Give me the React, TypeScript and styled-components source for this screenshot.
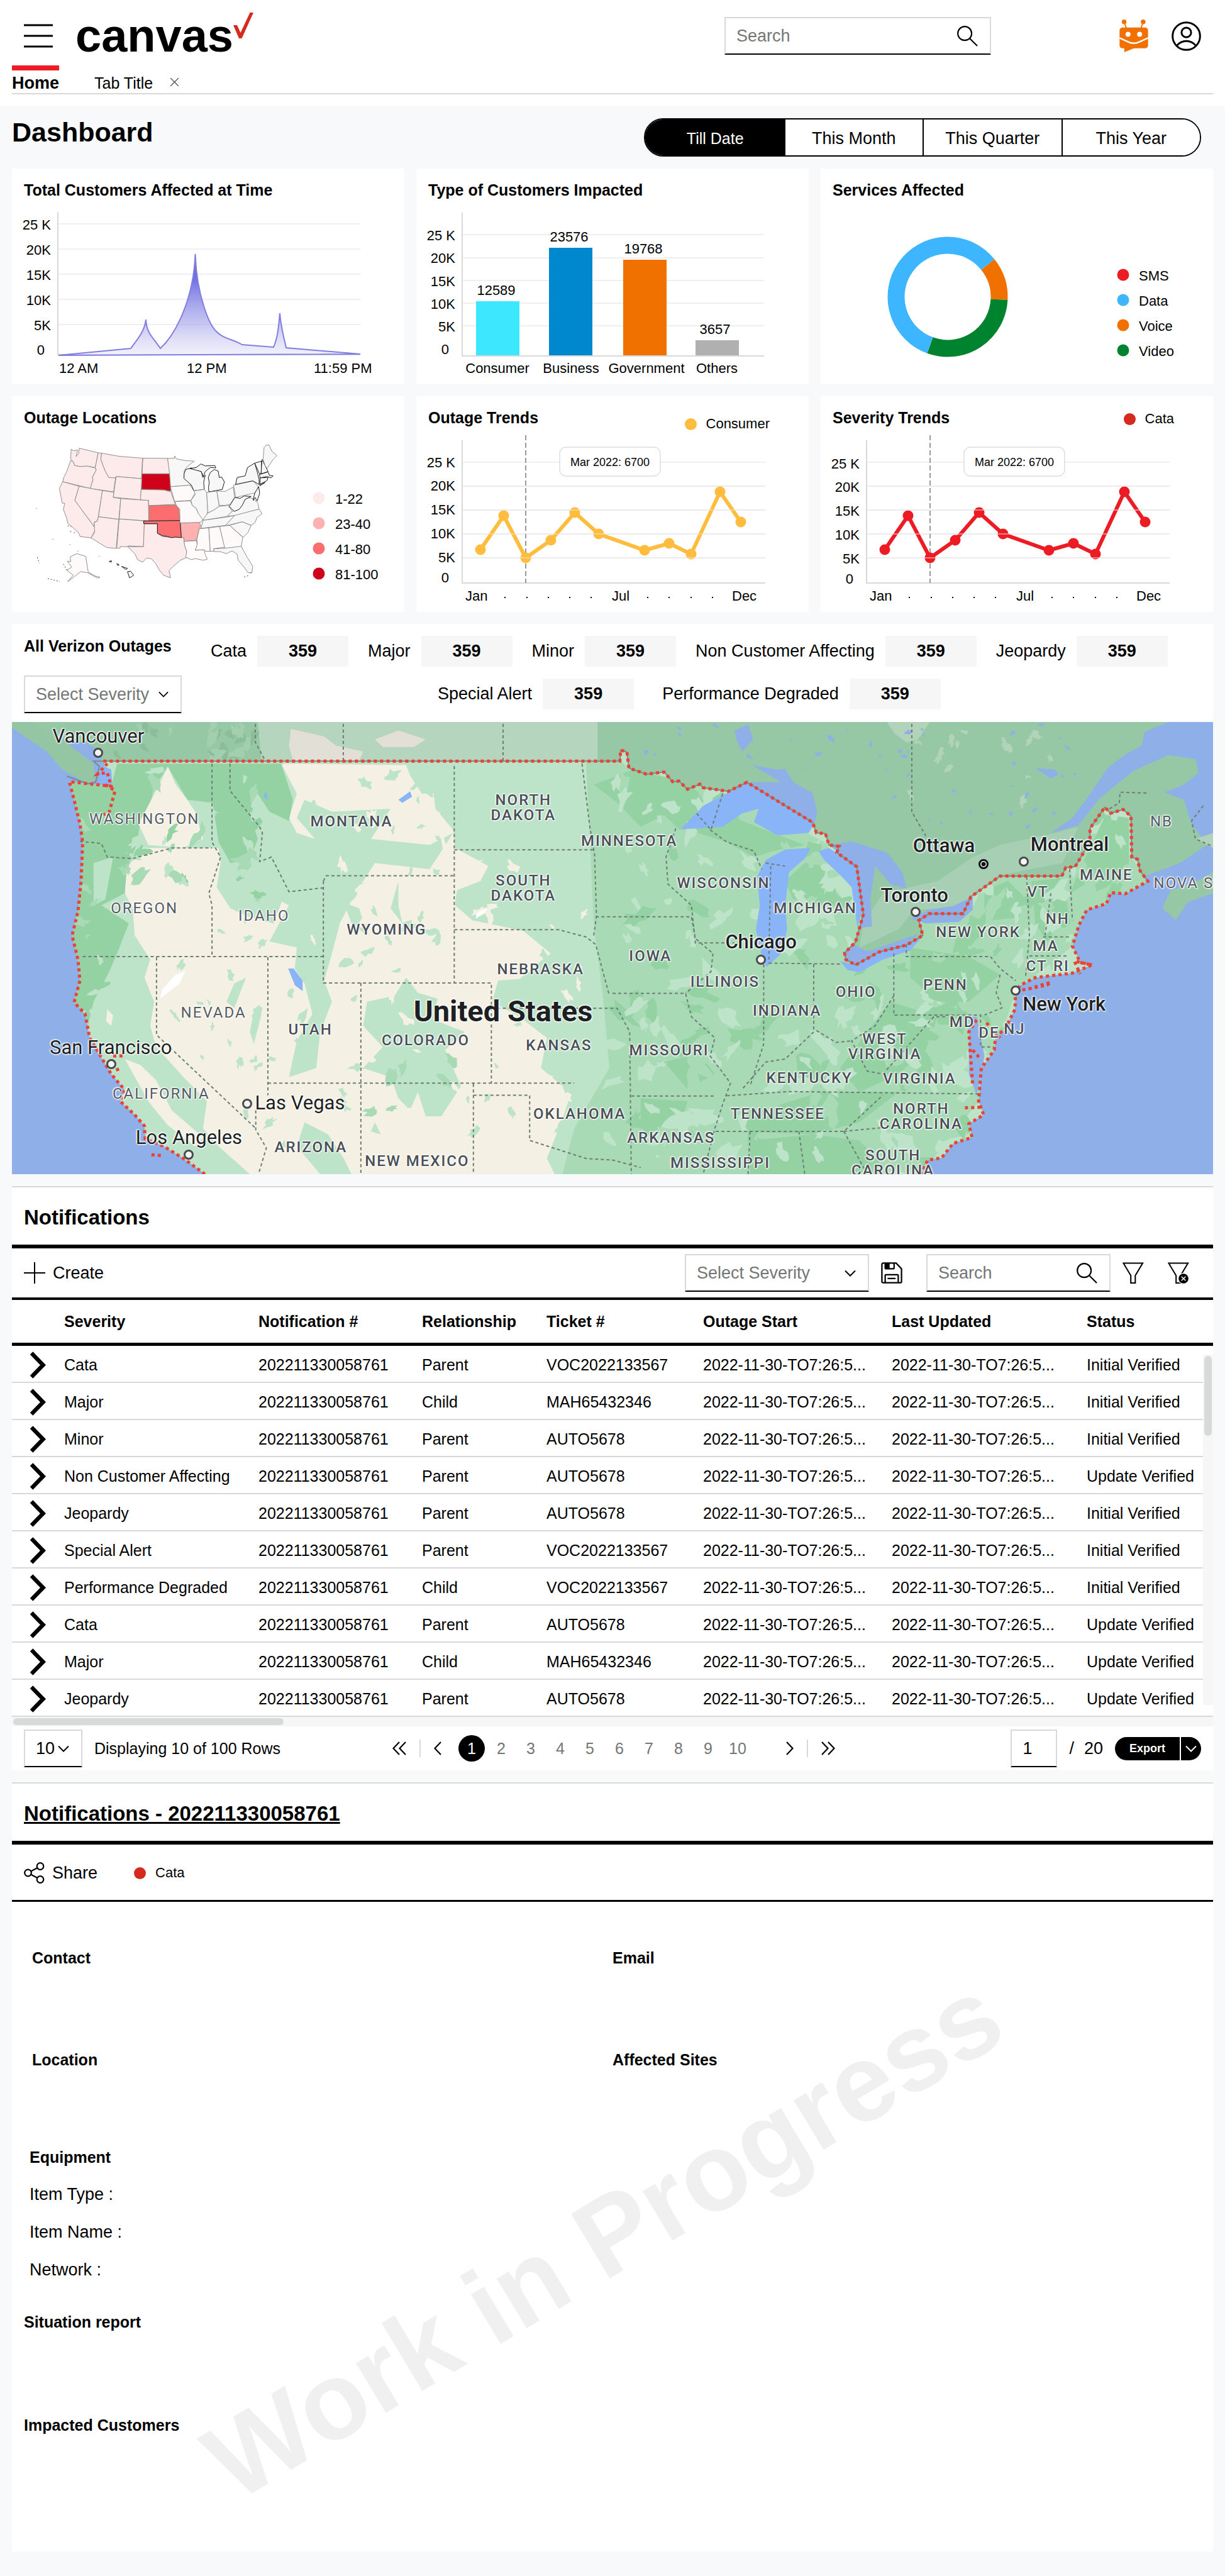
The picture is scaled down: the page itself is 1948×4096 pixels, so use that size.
import React from 'react';
import styled, { createGlobalStyle, css } from 'styled-components';

const GlobalStyle = createGlobalStyle`
  *, *::before, *::after { box-sizing: border-box; }
  body {
    margin: 0;
    background: #f8f9fb;
    color: #000;
    font-family: "Liberation Sans", Arial, sans-serif;
    font-size: 25px;
  }
  h1, h2, p { margin: 0; }
  button, input, select { font: inherit; color: inherit; }
  svg { display: block; }
`;

const HAIR = '#d8dada';
const MUTED = '#747676';

/* ---------- shared parts ---------- */

const IconButton = styled.button`
  display: flex;
  flex: none;
  padding: 0;
  border: 0;
  background: none;
`;

const Field = styled.label<{ $width: number }>`
  position: relative;
  display: flex;
  align-items: center;
  flex: none;
  width: ${(p) => p.$width}px;
  height: 60px;
  padding-right: 19px;
  border: 2px solid ${HAIR};
  border-bottom-color: #000;
  background: #fff;
`;

const FieldInput = styled.input`
  flex: 1;
  min-width: 0;
  height: 100%;
  padding: 0 0 0 17px;
  border: 0;
  background: transparent;
  font-size: 27px;
  outline: none;
  &::placeholder { color: ${MUTED}; opacity: 1; }
`;

const FieldSelect = styled.select<{ $muted?: boolean }>`
  position: absolute;
  inset: 0;
  width: 100%;
  height: 100%;
  padding: 0 0 0 17px;
  border: 0;
  background: transparent;
  appearance: none;
  font-size: 27px;
  color: ${(p) => (p.$muted ? MUTED : '#000')};
`;

const Push = styled.span`
  margin-left: auto;
`;

const ChevronDown = ({ width = 16, color = '#000' }: { width?: number; color?: string }) => (
  <svg width={width} height={width / 2 + 2} viewBox="0 0 18 11" fill="none" stroke={color} strokeWidth="2">
    <path d="M1 1.5 9 9.5 17 1.5" />
  </svg>
);

const SearchIcon = () => (
  <svg width="33" height="33" viewBox="0 0 34 34" fill="none" stroke="#000" strokeWidth="2.2">
    <circle cx="12.5" cy="12.5" r="11.3" />
    <path d="M20.5 20.5 33 33" />
  </svg>
);

function SelectBox(props: { label: string; value: string; width: number; muted?: boolean; chevron?: number }) {
  return (
    <Field $width={props.width}>
      <Push>
        <ChevronDown width={props.chevron} />
      </Push>
      <FieldSelect aria-label={props.label} $muted={props.muted} defaultValue={props.value}>
        <option>{props.value}</option>
      </FieldSelect>
    </Field>
  );
}

function SearchBox({ width }: { width: number }) {
  return (
    <Field $width={width}>
      <FieldInput aria-label="Search" type="text" placeholder="Search" />
      <SearchIcon />
    </Field>
  );
}

/* ---------- header ---------- */

const Header = styled.header`
  padding-bottom: 19px;
  background: #fff;
`;

const TopBar = styled.div`
  display: flex;
  align-items: center;
  height: 104px;
  padding: 10px 38px 0;
`;

const Brand = styled.a`
  display: flex;
  align-items: flex-start;
  margin-left: 36px;
  color: #000;
  font-size: 74px;
  font-weight: 700;
  line-height: 74px;
  text-decoration: none;
`;

const TopTools = styled.div`
  display: flex;
  align-items: center;
  gap: 37px;
  margin-left: auto;
`;

const ToolsGap = styled.div`
  margin-right: 167px;
`;

const TabList = styled.nav`
  display: flex;
  gap: 56px;
  height: 46px;
  margin: 0 19px;
  border-bottom: 2px solid ${HAIR};
`;

const Tab = styled.a<{ $active?: boolean }>`
  padding-top: 5px;
  border-top: 8px solid ${(p) => (p.$active ? '#ed1c24' : 'transparent')};
  color: #000;
  font-size: ${(p) => (p.$active ? 27 : 25)}px;
  font-weight: ${(p) => (p.$active ? 700 : 400)};
  line-height: 30px;
  text-decoration: none;
`;

const ClosableTab = styled.div`
  display: flex;
  align-items: flex-start;
  gap: 28px;
`;

const CloseButton = styled(IconButton)`
  margin-top: 20px;
`;

const BotIcon = () => (
  <svg width="46" height="52" viewBox="0 0 48 55">
    <g fill="#f07000">
      <circle cx="7.7" cy="4" r="4" />
      <circle cx="39.7" cy="4" r="4" />
      <path d="M7.7 4 11.5 15M39.7 4 36 15" stroke="#f07000" strokeWidth="2" />
      <rect y="13.5" width="48" height="35" rx="5" />
      <path d="M8 46V55L30 46Z" />
    </g>
    <circle cx="14.3" cy="24.8" r="4.2" fill="#fff" />
    <circle cx="33.7" cy="24.8" r="4.2" fill="#fff" />
    <path d="M0 31 14 37.5Q24 42.500 34 37.5L48 31" fill="none" stroke="#fff" strokeWidth="2.6" />
  </svg>
);

const UserIcon = () => (
  <svg width="47" height="47" viewBox="0 0 48 48" fill="none" stroke="#000" strokeWidth="3">
    <circle cx="24" cy="24" r="22.3" />
    <circle cx="24" cy="18" r="7.8" />
    <path d="M8.5 39.500C17 29.500 31 29.500 39.500 39.500" />
  </svg>
);

function PageHeader() {
  return (
    <Header>
      <TopBar>
        <IconButton aria-label="Menu">
          <svg width="46" height="38" viewBox="0 0 46 38" stroke="#000" strokeWidth="3">
            <path d="M0 2H46M0 19H46M0 36H46" />
          </svg>
        </IconButton>
        <Brand href="#">
          canvas
          <svg width="32" height="41" viewBox="0 0 32 41">
            <path d="M0 20H6L11.500 32 26.500 0H32L13.500 41H9Z" fill="#d52b1e" />
          </svg>
        </Brand>
        <TopTools>
          <ToolsGap>
            <SearchBox width={424} />
          </ToolsGap>
          <IconButton aria-label="Assistant">
            <BotIcon />
          </IconButton>
          <IconButton aria-label="Account">
            <UserIcon />
          </IconButton>
        </TopTools>
      </TopBar>
      <TabList>
        <Tab href="#" $active>
          Home
        </Tab>
        <ClosableTab>
          <Tab href="#">Tab Title</Tab>
          <CloseButton aria-label="Close tab">
            <svg width="13" height="13" viewBox="0 0 13 13" stroke="#333" strokeWidth="1.2">
              <path d="M0 0 13 13M13 0 0 13" />
            </svg>
          </CloseButton>
        </ClosableTab>
      </TabList>
    </Header>
  );
}

/* ---------- dashboard title and period switch ---------- */

const Main = styled.main`
  display: flex;
  flex-direction: column;
  gap: 19px;
  padding: 19px 19px 38px;
`;

const TitleRow = styled.div`
  display: flex;
  align-items: flex-start;
  justify-content: space-between;
  padding-right: 19px;
`;

const PageTitle = styled.h1`
  font-size: 43px;
  line-height: 44px;
`;

const Segments = styled.div`
  display: grid;
  grid-template-columns: repeat(4, 1fr);
  width: 886px;
  height: 61px;
  overflow: hidden;
  border: 2px solid #000;
  border-radius: 31px;
  background: #fff;
`;

const Segment = styled.button<{ $active?: boolean }>`
  padding: 3px 0 0;
  border: 0;
  border-left: 2px solid #000;
  background: ${(p) => (p.$active ? '#000' : '#fff')};
  color: ${(p) => (p.$active ? '#fff' : '#000')};
  font-size: ${(p) => (p.$active ? 25 : 27)}px;
`;

/* ---------- chart cards ---------- */

const CardGrid = styled.section`
  display: grid;
  grid-template-columns: repeat(3, 1fr);
  gap: 19px;
`;

const Card = styled.article`
  background: #fff;
  svg text { font-size: 22px; }
`;

const CardHead = styled.div`
  display: flex;
  align-items: flex-start;
  justify-content: space-between;
  height: 50px;
  padding: 18px 62px 0 19px;
`;

const CardTitle = styled.h2`
  font-size: 25px;
  line-height: 32px;
  white-space: nowrap;
`;

const Legend = styled.div<{ $drop: number }>`
  display: flex;
  align-items: center;
  gap: 15px;
  margin-top: ${(p) => p.$drop}px;
  font-size: 22px;
  line-height: 32px;
`;

const Dot = styled.span<{ $color: string }>`
  width: 19px;
  height: 19px;
  border-radius: 50%;
  background: ${(p) => p.$color};
`;

const Chart = ({ label, children }: { label: string; children: React.ReactNode }) => (
  <svg role="img" aria-label={label} viewBox="0 50 624 293" width="100%">
    {children}
  </svg>
);

const TICKS = ['25 K', '20K', '15K', '10K', '5K', '0'];

function Axes(props: { grid: number[]; base: number[]; top: number; bottom: number; right: number }) {
  return (
    <>
      {props.grid.map((y) => (
        <path key={y} d={`M74 ${y}H${props.right}`} stroke="#efefef" strokeWidth="2" />
      ))}
      <path d={`M73 ${props.top}V${props.bottom}H${props.right}`} fill="none" stroke={HAIR} strokeWidth="2" />
      {TICKS.map((t, i) => (
        <text key={t} x={t === '0' ? 52 : 62} y={props.base[i]} textAnchor="end">
          {t}
        </text>
      ))}
    </>
  );
}

function AffectedAtTime() {
  return (
    <Chart label="Total customers affected at time">
      <defs>
        <linearGradient id="peak" x1="0" y1="0" x2="0" y2="1">
          <stop offset="0" stopColor="#5f5fe0" />
          <stop offset="0.25" stopColor="#6a6ae4" stopOpacity="0.95" />
          <stop offset="0.7" stopColor="#9d9be8" stopOpacity="0.55" />
          <stop offset="1" stopColor="#d9d6f4" stopOpacity="0.35" />
        </linearGradient>
      </defs>
      <Axes grid={[88, 128, 168, 208, 248]} base={[97, 137, 177, 217, 257, 296]} top={69} bottom={296} right={554} />
      <path
        d="M74 297 189 286C201 270 211 258 213 240C214 262 224 268 236 286C262 262 289 205 291.500 136C294 205 315 250 325 259C335 270 350 271 366 280L416 284C423 268 424 250 426 230C428 255 433 270 436 285L554 295Z"
        fill="url(#peak)"
        stroke="#827fe0"
        strokeWidth="2"
      />
      <text x="75" y="325">12 AM</text>
      <text x="278" y="325">12 PM</text>
      <text x="480" y="325">11:59 PM</text>
    </Chart>
  );
}

const BARS = [
  { name: 'Consumer', value: 12589, x: 95, top: 211, nameX: 129, color: '#3de8ff' },
  { name: 'Business', value: 23576, x: 211, top: 126, nameX: 246, color: '#0088ce' },
  { name: 'Government', value: 19768, x: 329, top: 145, nameX: 366, color: '#f07000' },
  { name: 'Others', value: 3657, x: 444, top: 273, nameX: 478, color: '#b0b0b0' },
];

function CustomerTypes() {
  return (
    <Chart label="Type of customers impacted">
      <Axes grid={[105, 142, 178, 214, 250]} base={[114, 150, 187, 223, 259, 295]} top={70} bottom={298} right={553} />
      {BARS.map((b) => (
        <g key={b.name} textAnchor="middle">
          <rect x={b.x} y={b.top} width="69" height={297 - b.top} fill={b.color} />
          <text x={b.name === 'Others' ? 475 : b.x + 32} y={b.top - 10}>{b.value}</text>
          <text x={b.nameX} y="325">{b.name}</text>
        </g>
      ))}
    </Chart>
  );
}

const ringPoint = (deg: number) => {
  const a = (deg * Math.PI) / 180;
  return `${202 + 82 * Math.sin(a)} ${204 - 82 * Math.cos(a)}`;
};

const ringArc = (from: number, to: number) =>
  `M${ringPoint(from)}A82 82 0 ${to - from > 180 ? 1 : 0} 1 ${ringPoint(to)}`;

const SERVICES = [
  ['SMS', '#ed1c24'],
  ['Data', '#3db5ff'],
  ['Voice', '#f07000'],
  ['Video', '#00832f'],
];

const RANGES = [
  ['1-22', '#fdeaea'],
  ['23-40', '#ffb1b1'],
  ['41-80', '#fb6d6f'],
  ['81-100', '#d0021b'],
];

function Services() {
  return (
    <Chart label="Services affected">
      <g fill="none" strokeWidth="27">
        <path d={ringArc(51, 93)} stroke="#f07000" />
        <path d={ringArc(93, 200)} stroke="#00832f" />
        <path d={ringArc(200, 411)} stroke="#3db5ff" />
      </g>
      {SERVICES.map(([name, color], i) => (
        <g key={name}>
          <circle cx="481" cy={169 + i * 40} r="9.500" fill={color} />
          <text x="506" y={178 + i * 40}>{name}</text>
        </g>
      ))}
    </Chart>
  );
}

const P = '#fdebeb';
const G = '#f7f7f7';
const W = '#fffafa';
/* [outline, fill, dark border] */
const STATES: [string, string, boolean?][] = [
  ['117,48 130,56 150,52 142,85 155,70 158,43 253,66 238,140 200,133 160,135 135,130 128,112 115,98', P],
  ['115,105 128,112 135,130 160,135 200,133 238,142 243,152 223,190 227,200 213,245 75,211 80,190 95,160', P],
  ['75,211 157,234 136,305 235,440 237,455 217,493 162,486 155,468 130,445 100,420 95,395 78,350 85,320 72,318 66,285 58,245', P],
  ['157,234 274,256 254,385 248,410 235,412 232,435 136,305', P],
  ['253,66 270,68 266,100 287,155 306,190 340,190 330,262 213,245 227,200 223,190 243,152 238,140', P],
  ['270,68 360,84 475,93 470,196 343,185 338,192 306,190 287,155 266,100', P],
  ['343,185 472,196 465,302 328,289', P],
  ['274,256 331,264 328,290 366,296 356,400 254,387', P],
  ['366,296 505,305 506,408 358,398', P],
  ['254,387 356,400 343,546 295,541 217,493 235,465 233,415 248,410', P],
  ['358,398 485,408 480,537 402,533 405,538 364,536 362,545 346,545', P],
  ['477,93 601,94 614,171 473,171', P],
  ['468,250 585,253 617,262 640,325 506,331 506,305 465,302', P],
  ['472,172 611,172 617,258 600,256 585,252 470,249', '#d0021b'],
  ['508,331 648,328 658,348 662,406 508,406', '#fb6d6f'],
  ['484,422 550,422 550,470 575,486 620,491 665,486 683,494 686,530 697,560 695,592 665,605 630,635 608,658 616,693 580,680 560,655 540,620 520,598 495,594 476,615 450,602 438,575 402,537 480,537', P],
  ['665,418 757,412 768,430 758,455 746,505 684,510 682,492 670,490', '#ffb1b1'],
  ['481,408 663,406 666,440 670,492 640,489 620,492 600,486 575,482 550,470 550,422 481,422', '#fb6d6f', true],
  ['684,510 746,507 750,530 740,555 784,552 788,572 800,600 780,605 740,597 720,602 692,590 697,562 686,530', W],
  ['638,311 715,307 725,330 745,345 755,370 780,395 768,415 663,418 662,350 645,330', W],
  ['615,236 712,228 728,250 740,265 718,305 636,310', W],
  ['601,94 635,94 637,82 645,97 690,105 735,108 700,135 685,155 683,185 720,228 616,236 611,172', G],
  ['692,150 720,142 770,160 778,190 790,178 782,215 785,250 733,257 720,228 700,210 683,195 684,170', G, true],
  ['815,165 835,150 855,158 860,190 872,188 886,212 875,250 808,262 806,240 810,215 805,190', G, true],
  ['712,145 745,140 768,122 790,132 838,130 843,142 815,140 790,160 780,185 770,160', G, true],
  ['733,257 785,250 797,265 803,360 795,385 778,402 755,370 745,345 725,330 718,305 740,275', G],
  ['797,265 848,258 860,335 830,355 803,368', G],
  ['848,258 890,260 930,238 938,290 915,325 890,330 860,330', G],
  ['778,402 803,368 830,355 860,335 905,330 925,360 900,385 778,405', G],
  ['768,445 780,405 900,388 940,380 892,430', G],
  ['760,447 808,443 815,560 790,560 784,552 740,555 750,525 748,500', W],
  ['808,443 862,436 888,540 832,547 835,560 815,560', W],
  ['862,436 912,430 978,490 970,540 888,545', W],
  ['832,548 888,545 970,535 1000,590 1028,635 1024,668 1005,668 985,640 955,605 950,575 925,558 895,572 865,562 835,562', G],
  ['912,430 975,412 1020,430 1005,465 980,490', G],
  ['892,430 940,378 1060,348 1075,372 1050,390 1040,415 1020,430 975,412 912,428', G],
  ['900,385 925,360 950,350 990,290 1030,295 1055,320 1060,348 940,380', G],
  ['938,290 965,295 985,283 1020,285 990,300 975,330 960,350 935,360 910,335 920,320', G, true],
  ['932,228 1030,207 1055,235 1050,265 942,290', G],
  ['942,225 950,190 990,182 1002,140 1038,118 1050,160 1060,200 1060,225 1028,207', G, true],
  ['1038,118 1072,108 1072,140 1070,170 1062,172', G, true],
  ['1075,100 1105,160 1070,172 1072,135', G, true],
  ['1062,175 1105,162 1112,180 1130,182 1120,192 1100,185 1065,192', G, true],
  ['1065,192 1105,190 1100,205 1064,225 1090,215 1064,232', G, true],
  ['1080,98 1085,40 1095,28 1110,27 1125,60 1150,80 1130,100 1100,145 1090,130', G],
  ['1040,265 1058,236 1063,270 1050,308 1040,290 1030,305 1035,280', G, true],
  ['112,588 145,572 190,585 203,665 240,685 262,690 250,695 200,668 165,662 130,690 100,712 128,680 95,655 120,640 98,610 115,612', W],
  ['400,662 415,660 431,680 410,694', G, true],
  ['308,612 318,606 320,614', G, true],
  ['346,622 358,628 352,632', G, true],
  ['370,636 400,646 392,652', G, true],
];

function OutageLocations() {
  return (
    <Chart label="Outage locations">
      <g transform="translate(57 69) scale(0.317)" strokeLinejoin="round">
        {STATES.map(([points, fill, dark]) => (
          <polygon key={points} points={points} fill={fill} stroke={dark ? '#111' : '#8a8a8a'} strokeWidth="3" />
        ))}
        <path
          d="M0 697 60 712M96 655l-18-32M100 432l18 4M112 460l8 2M130 468l8-4M24 500h3M110 527h3M257 585h3M150 560h3M985 690l20-8M1020 665l-8 8M1028 300l14 8M-58 345h3M-52 590l10 30"
          stroke="#333"
          strokeWidth="3"
          strokeDasharray="6 9"
        />
      </g>
      {RANGES.map(([name, color], i) => (
        <g key={name}>
          <circle cx="488" cy={162 + i * 40} r="9.500" fill={color} />
          <text x="514" y={171 + i * 40}>{name}</text>
        </g>
      ))}
    </Chart>
  );
}

const TREND: [number, number][] = [
  [102, 244], [139, 190], [174, 257], [214, 229], [252, 185], [290, 219],
  [363, 245], [402, 234], [437, 251], [483, 152], [516, 200],
];

const TipText = styled.text`
  svg && { font-size: 18px; }
`;

function Trend({ label, color, shift }: { label: string; color: string; shift: number }) {
  const grid = [105, 143, 181, 219, 257];
  return (
    <Chart label={label}>
      <Axes grid={grid} base={[113, 150, 188, 226, 264, 296].map((y) => y + shift)} top={70} bottom={297} right={555} />
      <path d="M174 62V297" stroke="#999" strokeWidth="2" strokeDasharray="8 4" />
      <polyline points={TREND.join(' ')} fill="none" stroke={color} strokeWidth="6" />
      {TREND.map(([x, y]) => (
        <circle key={x} cx={x} cy={y} r="8.500" fill={color} />
      ))}
      {grid.slice(1).map((y) => (
        <path key={y} d={`M74 ${y}H554`} stroke="#e8e8e8" strokeOpacity="0.5" strokeWidth="2" />
      ))}
      <rect x="228" y="81" width="160" height="46" rx="10" fill="#fff" stroke="#ccc" />
      <TipText x="308" y="111" textAnchor="middle">
        Mar 2022: 6700
      </TipText>
      <text x="78" y="325">Jan</text>
      <text x="311" y="325">Jul</text>
      <text x="502" y="325">Dec</text>
      {[140, 175, 209, 243, 277, 367, 401, 436, 470].map((x) => (
        <rect key={x} x={x} y="319" width="2" height="2" />
      ))}
    </Chart>
  );
}

function ChartCard(props: {
  title: string;
  legend?: { name: string; color: string; drop: number };
  children: React.ReactNode;
}) {
  return (
    <Card>
      <CardHead>
        <CardTitle>{props.title}</CardTitle>
        {props.legend && (
          <Legend $drop={props.legend.drop}>
            <Dot $color={props.legend.color} />
            {props.legend.name}
          </Legend>
        )}
      </CardHead>
      {props.children}
    </Card>
  );
}

/* ---------- outage summary and map ---------- */

const Summary = styled.section`
  background: #fff;
`;

const SummaryHead = styled.div`
  display: flex;
  gap: 46px;
  padding: 19px 19px 14px;
`;

const SummaryLeft = styled.div`
  display: flex;
  flex-direction: column;
  gap: 31px;
`;

const Stats = styled.div`
  display: flex;
  flex-direction: column;
  align-items: center;
  gap: 19px;
`;

const StatRow = styled.div<{ $gap: number }>`
  display: flex;
  gap: ${(p) => p.$gap}px;
`;

const Stat = styled.div`
  display: flex;
  align-items: center;
  gap: 17px;
  font-size: 27px;
  white-space: nowrap;
`;

const StatValue = styled.output`
  width: 145px;
  background: #f6f6f6;
  font-weight: 700;
  line-height: 49px;
  text-align: center;
`;

const MapFrame = styled.div`
  position: relative;
  overflow: hidden;
  aspect-ratio: 1910 / 719;
`;

const MapDrawing = styled.svg`
  width: 100%;
  height: 100%;
  path, polygon { vector-effect: non-scaling-stroke; }
`;

type LabelKind = 'state' | 'light' | 'city' | 'bold' | 'country';

const kinds = {
  state: css`font-size: 24px; font-weight: 500; letter-spacing: 2px; line-height: 24px; color: #4a4f57;`,
  light: css`font-size: 24px; letter-spacing: 2px; line-height: 24px; color: #565b63;`,
  city: css`font-size: 31px; line-height: 32px;`,
  bold: css`font-size: 31px; font-weight: 500; line-height: 32px;`,
  country: css`font-size: 47px; font-weight: 700; line-height: 48px;`,
};

/* map coordinates run 31..3105 across and 32..1532 down */
const pinned = css<{ $x: number; $y: number }>`
  position: absolute;
  left: ${(p) => ((p.$x - 31) / 3074) * 100}%;
  top: ${(p) => ((p.$y - 32) / 1500) * 100}%;
  transform: translate(-50%, -50%);
`;

const MapLabel = styled.span<{ $x: number; $y: number; $kind: LabelKind }>`
  ${pinned}
  color: #1d1f23;
  font-family: Roboto, sans-serif;
  text-align: center;
  text-shadow: 0 0 3px #fff, 0 0 3px #fff, 1px 1px 2px #fff, -1px -1px 2px #fff;
  white-space: pre;
  ${(p) => kinds[p.$kind]}
`;

const Marker = styled.span<{ $x: number; $y: number; $capital?: boolean }>`
  ${pinned}
  width: 16px;
  height: 16px;
  border: 3px solid ${(p) => (p.$capital ? '#111' : '#4b4b4b')};
  border-radius: 50%;
  background: ${(p) => (p.$capital ? 'radial-gradient(#111 0 3px, #fff 4px)' : '#f4f4f4')};
`;

const LABELS: [string, number, number, LabelKind][] = [
  ['WASHINGTON', 370, 353, 'light'],
  ['OREGON', 370, 649, 'light'],
  ['IDAHO', 676, 675, 'light'],
  ['NEVADA', 547, 996, 'light'],
  ['CALIFORNIA', 413, 1266, 'light'],
  ['MONTANA', 900, 361, 'state'],
  ['NORTH\nDAKOTA', 1340, 316, 'state'],
  ['SOUTH\nDAKOTA', 1340, 583, 'state'],
  ['WYOMING', 990, 720, 'state'],
  ['NEBRASKA', 1384, 851, 'state'],
  ['COLORADO', 1090, 1087, 'state'],
  ['KANSAS', 1431, 1104, 'state'],
  ['UTAH', 795, 1053, 'state'],
  ['ARIZONA', 796, 1443, 'state'],
  ['NEW MEXICO', 1068, 1488, 'state'],
  ['OKLAHOMA', 1484, 1332, 'state'],
  ['MINNESOTA', 1611, 427, 'state'],
  ['WISCONSIN', 1852, 567, 'state'],
  ['MICHIGAN', 2087, 649, 'state'],
  ['IOWA', 1665, 808, 'state'],
  ['ILLINOIS', 1856, 893, 'state'],
  ['INDIANA', 2015, 990, 'state'],
  ['OHIO', 2191, 927, 'state'],
  ['PENN', 2420, 905, 'state'],
  ['NEW YORK', 2504, 728, 'state'],
  ['VT', 2657, 596, 'state'],
  ['NH', 2707, 686, 'state'],
  ['MA', 2677, 774, 'state'],
  ['CT', 2654, 842, 'state'],
  ['RI', 2717, 842, 'state'],
  ['MD', 2463, 1028, 'state'],
  ['DE', 2532, 1062, 'state'],
  ['NJ', 2597, 1050, 'state'],
  ['MAINE', 2832, 538, 'state'],
  ['NB', 2973, 361, 'light'],
  ['NOVA S', 3030, 567, 'light'],
  ['WEST\nVIRGINIA', 2265, 1108, 'state'],
  ['KENTUCKY', 2072, 1213, 'state'],
  ['VIRGINIA', 2354, 1215, 'state'],
  ['TENNESSEE', 1991, 1332, 'state'],
  ['NORTH\nCAROLINA', 2358, 1341, 'state'],
  ['SOUTH\nCAROLINA', 2286, 1494, 'state'],
  ['ARKANSAS', 1718, 1412, 'state'],
  ['MISSISSIPPI', 1844, 1494, 'state'],
  ['MISSOURI', 1713, 1121, 'state'],
  ['Vancouver', 252, 80, 'city'],
  ['San Francisco', 284, 1113, 'city'],
  ['Las Vegas', 768, 1296, 'city'],
  ['Los Angeles', 484, 1412, 'city'],
  ['Chicago', 1948, 763, 'bold'],
  ['Toronto', 2341, 607, 'bold'],
  ['Ottawa', 2416, 444, 'bold'],
  ['Montreal', 2738, 438, 'bold'],
  ['New York', 2724, 968, 'bold'],
  ['United States', 1288, 992, 'country'],
];

const MARKERS: [number, number, boolean?][] = [
  [251, 134], [285, 1167], [633, 1299], [484, 1467], [1948, 820],
  [2343, 663], [2517, 504, true], [2620, 495], [2599, 922],
];

const US_COAST_WEST =
  '470,1480 420,1440 372,1415 370,1372 345,1335 308,1290 318,1250 285,1200 260,1145 230,1080 218,1000 190,962 205,890 200,820 185,740 200,660 208,560 212,430 205,370 190,290 178,230';
const US_NORTH =
  '265,162 1587,162 1589,125 1605,132 1610,185 1655,205 1700,198 1722,230 1738,228 1760,255 1792,238 1800,250 1865,262 1912,232 2080,365 2090,400 2113,402 2122,440 2148,445 2142,465 2193,512 2210,670 2190,762 2162,798 2165,820 2190,838 2250,795 2320,772 2362,740 2352,690 2378,668 2465,668 2485,612 2560,543 2718,543 2728,515 2752,512 2790,430 2790,385 2828,315 2843,335 2875,322 2895,345 2897,480 2912,488 2918,525 2938,560';
const US_EAST =
  '2880,602 2843,598 2832,635 2782,655 2762,705 2745,775 2765,830 2795,838 2745,865 2650,880 2612,905 2600,925 2598,985 2575,1045 2548,1080 2545,1120 2512,1180 2505,1290 2518,1335 2480,1365 2488,1410 2440,1430 2410,1478 2375,1485 2358,1532';

const DARK = '#94d2a4';
const MID = '#a8dbb5';
const PALE = '#bde3c9';
const SAND = '#f4f0e4';
const LAKE = '#8ab4f8';
const SEA = '#8eafe8';

const LAND: [string, string][] = [
  [`${US_NORTH} ${US_EAST} 525,1532 ${US_COAST_WEST} 285,245 272,200`, PALE],
  ['1500,162 1587,162 1612,185 1865,262 2210,500 2400,700 2560,543 2800,400 2897,480 2938,560 2745,775 2600,925 2505,1290 2358,1532 1440,1532 1470,1380 1560,1180 1545,960 1520,700 1510,420', MID],
  ['178,230 285,245 300,170 560,170 545,300 480,290 430,180 395,250 380,330 360,360 350,440 325,520 320,600 260,640 330,700 300,800 280,860 240,960 225,1040 215,1000 190,962 205,890 200,820 185,740 208,560 212,430 205,370', DARK],
  ['400,260 430,180 450,240 480,290 500,330 520,420 470,450 380,440 355,370', SAND],
  ['730,170 1040,175 1050,210 1080,270 1110,270 1115,320 1160,390 1165,450 1250,510 1230,560 1170,590 1165,640 1210,690 1340,725 1410,800 1380,830 1330,885 1275,890 1260,960 1330,1010 1400,1080 1385,1180 1440,1240 1455,1290 1440,1350 1400,1480 1420,1532 640,1532 560,1440 520,1380 530,1290 470,1210 400,1110 385,1040 395,960 370,880 385,820 345,740 340,650 320,600 325,520 360,450 560,450 565,500 555,580 590,650 640,680 700,700 730,600 690,500 740,420 740,340 690,330 640,290 650,200', SAND],
  ['590,170 720,170 760,270 740,350 760,400 830,430 850,490 900,520 910,600 870,700 850,800 830,890 850,960 820,1060 810,1180 740,1210 760,1090 800,1000 780,900 755,850 760,780 690,760 740,640 680,600 590,640 570,560 640,500 560,450 545,300 545,170', PALE],
  ['545,170 720,170 750,290 740,360 690,330 650,250 640,340 660,420 640,490 590,500 560,430 545,300', DARK],
  ['940,960 1010,940 1040,880 1070,930 1120,950 1110,1020 1190,1060 1140,1120 1180,1240 1130,1340 1090,1340 1070,1260 1050,1320 1020,1280 1000,1210 930,1180 980,1110 930,1040', PALE],
  ['780,290 850,330 1000,320 950,420 1100,440 1160,400 1100,520 960,500 930,560 900,600 830,560 820,440 760,350', PALE],
  ['880,630 920,650 940,740 900,700', PALE],
  ['1020,560 1000,650 1030,700 1020,640', PALE],
  ['600,900 630,880 600,980 580,960', PALE],
  ['650,990 670,1000 650,1100 640,1060', PALE],
  ['780,1360 840,1400 880,1480 900,1532 820,1532 760,1440', PALE],
  ['960,1360 975,1400 950,1390', PALE],
  ['320,1150 360,1170 400,1220 440,1320 520,1410 500,1440 430,1370 380,1290 350,1220', SAND],
  ['275,985 290,1005 285,1040 272,1025', SAND],
  ['240,500 290,480 270,620 240,640', PALE],
  ['1620,190 1860,265 1740,390 1700,340 1640,380 1580,300 1520,240', DARK],
  ['1760,390 1900,360 2000,410 2060,440 1980,460 1930,480 1860,430', DARK],
  ['2010,560 2060,500 2120,510 2140,600 2180,650 2100,640 2030,620', DARK],
  ['2520,590 2580,560 2620,610 2610,680 2540,690 2520,650', DARK],
  ['2640,560 2720,550 2740,700 2680,760 2650,700', DARK],
  ['2830,340 2890,350 2890,500 2790,560 2740,600 2760,530', DARK],
  ['2330,780 2480,810 2560,870 2480,960 2400,960 2330,880', DARK],
  ['2280,960 2400,1010 2370,1120 2300,1200 2200,1260 2150,1180 2220,1060', DARK],
  ['2100,1260 2300,1260 2200,1360 2080,1400 1900,1390 2000,1300', DARK],
  ['1640,1280 1760,1290 1740,1380 1640,1370', DARK],
  ['1700,1160 1790,1130 1830,1200 1760,1250', DARK],
  ['1920,1420 2080,1400 2200,1420 2280,1532 1920,1532', DARK],
];

const CANADA: [string, string][] = [
  ['31,32 2990,32 2930,65 2922,110 2880,140 2835,185 2780,290 2745,350 2690,400 2760,375 2815,285 2900,195 2990,142 3060,155 3068,200 3030,240 2980,265 3030,290 3050,370 3090,440 3020,500 2938,540 2897,560 2600,640 2300,860 2100,700 1865,300 265,170 190,110 120,60', '#96c8a6'],
  ['660,32 1530,32 1530,162 670,162', '#b5d5be'],
  ['31,50 31,32 80,32 120,60 170,100 240,170 245,225 225,235 160,190 120,130', '#94c6a4'],
  ['745,55 830,80 860,110 930,130 920,160 750,160 740,110', '#e2dfd6'],
  ['960,90 1020,60 1090,90 1060,115 980,115', '#e2dfd6'],
  ['2270,32 2380,32 2350,90 2320,100 2290,70', '#b0d3b9'],
  ['2490,480 2560,440 2700,400 2760,380 2720,500 2560,540 2500,600 2440,650 2340,655 2300,720 2200,780 2210,700 2260,600 2400,560', '#a6cfb4'],
  ['2997,590 3050,570 3105,530 3105,600 3040,630 3010,688 2975,650', '#96c8a6'],
  ['3060,420 3105,400 3105,450', '#b0d3b9'],
];

const LAKES: [string, string][] = [
  ['2000,232 1925,175 1990,190 2010,188 2030,230 2080,268 2092,330 2085,368 1912,232', SEA],
  ['1742,388 1800,310 1865,265 1912,232 2085,368 2070,400 1990,408 1965,390 1930,365 1942,320 1900,335 1850,380', LAKE],
  ['1935,720 1945,640 1938,545 1960,490 2010,455 2075,450 2060,485 2020,530 2010,640 2015,720 2000,800 1962,845 1945,780', LAKE],
  ['2095,460 2122,450 2193,512 2210,640 2195,715 2180,580 2155,545 2110,490', LAKE],
  ['2122,440 2180,428 2270,465 2310,530 2320,585 2280,570 2240,510 2228,620 2232,710 2200,715 2210,640 2193,512', SEA],
  ['2150,825 2190,838 2250,795 2320,772 2362,742 2330,790 2260,820 2200,862 2170,855', LAKE],
  ['2180,790 2230,790 2350,735 2320,772 2250,795 2190,838', SEA],
  ['2330,685 2378,655 2440,642 2490,612 2490,655 2455,695 2370,700', SEA],
  ['738,850 752,850 775,890 775,925 755,905', LAKE],
  ['1020,290 1050,262 1055,280 1030,300', LAKE],
  ['245,165 285,190 288,245 255,235 255,205', LAKE],
  ['1880,60 1915,40 1928,90 1900,130 1885,90', SEA],
  ['2650,185 2700,190 2710,205 2690,220', SEA],
  ['680,260 688,290 675,280', LAKE],
  ['130,60 170,95 220,100 262,135 258,168 240,170 190,120', SEA],
];

const BORDERS =
  'M654 38V100L680 162M879 38V162M1288 38V162M2334 38V330L2370 410M543 170V430L565 480 535 600 543 640V810' +
  'M205 428 260 435 275 480 340 485 440 450H543M589 170V260L665 380 672 400 665 495 695 480 740 595 828 582M212 810H828' +
  'M828 560 835 542H1163M828 560V898H1258V1232M1163 178V898M1163 456H1520M1163 721H1430L1500 745 1525 770 1560 940' +
  'M1490 170 1510 380 1522 470 1527 675 1520 740M401 812V1070L655 1380M686 812V1270M655 1320V1385L682 1445 662 1532M686 1230H1470' +
  'M924 898V1532M1212 1232V1532M1212 1270H1356V1420L1500 1480 1568 1485 1640 1510M1258 982H1580L1612 1060 1616 1532M1525 678H1770L1780 750 1825 800' +
  'M1568 932H1755L1770 1010 1830 1080 1818 1140 1870 1230 1850 1300 1830 1380 1800 1532M1616 1273H1830' +
  'M1730 385 1705 480 1710 570 1770 640 1780 765H1880M1818 390 1860 430 1930 460 1950 520M1825 800 1820 860 1755 932' +
  'M1955 835V1100L1920 1240M1968 832 2150 835M2083 835V1050L2140 1095 2180 1090M2083 1060 2010 1150 1960 1160 1900 1250M1860 1272 2020 1258 2512 1266' +
  'M1832 1390H2160L2260 1270M2160 1390 2280 1375M1920 1390 1915 1532M2045 1390 2060 1532M2160 1390 2220 1532M2288 800V1004H2510V1110H2545M2288 940 2240 1040 2180 1090 2220 1190 2260 1200 2390 1010 2420 1010' +
  'M2320 770V810H2535L2560 850 2600 890M2560 870 2550 930 2565 980 2520 1004M2628 545 2635 740 2625 880M2670 745H2740M2635 808H2730M2690 600 2675 740M2738 520 2745 690' +
  'M2840 320 2865 300 2867 265 2940 268M3080 310 3050 360 3060 420 3105 445M1960 500 2010 510M1973 510 1968 830M1850 270 1820 390 1780 330';

const RED_LINES = [
  `M${US_NORTH} ${US_EAST}`,
  'M2601 925 2680 905 2690 895 2640 915M2795 838 2750 825 2765 868',
  'M2500 1020 2480 1060 2490 1240M2490 1120 2510 1150M2510 1310 2470 1312M2525 1030 2560 1080',
  `M525,1532 ${US_COAST_WEST} 285,245 275,200 250,205 275,170`,
  'M270 240 295 260 280 330 265 340M388 1468 415 1470M290 1140 320 1140M300 1180 305 1200',
];

type Zone = [x1: number, y1: number, x2: number, y2: number, count: number, size: number, fills: string[]];

/* deterministic jagged patches of vegetation and small lakes */
function makePatches(zones: Zone[]) {
  let seed = 7;
  const rnd = () => {
    seed = (seed * 16807) % 2147483647;
    return seed / 2147483647;
  };
  const out: { points: string; fill: string }[] = [];
  zones.forEach(([x1, y1, x2, y2, count, size, fills]) => {
    for (let i = 0; i < count; i += 1) {
      const cx = x1 + rnd() * (x2 - x1);
      const cy = y1 + rnd() * (y2 - y1);
      const tilt = rnd() * 3;
      const long = size * (0.5 + rnd());
      const pts: string[] = [];
      for (let k = 0; k < 12; k += 1) {
        const a = (k / 12) * Math.PI * 2;
        const r = 0.35 + rnd() * 0.8;
        const px = Math.cos(a) * long * r;
        const py = Math.sin(a) * long * 0.5 * r;
        const x = cx + px * Math.cos(tilt) - py * Math.sin(tilt);
        const y = cy + (px * Math.sin(tilt) + py * Math.cos(tilt)) * 1.3;
        pts.push(`${Math.round(x)},${Math.round(y)}`);
      }
      out.push({ points: pts.join(' '), fill: fills[i % fills.length] });
    }
  });
  return out;
}

const US_PATCHES = makePatches([
  [1560, 200, 2900, 1520, 380, 36, [PALE, DARK, MID, PALE]],
  [300, 180, 720, 640, 34, 24, [DARK, PALE, MID]],
  [200, 300, 330, 1000, 20, 20, [DARK, MID, PALE]],
  [600, 680, 1000, 1450, 26, 17, [PALE]],
  [760, 200, 1180, 880, 46, 21, [PALE, SAND, PALE]],
  [1180, 500, 1500, 1500, 30, 20, [PALE, SAND]],
  [940, 950, 1180, 1340, 12, 22, [MID, SAND]],
  [400, 700, 660, 1300, 14, 14, [PALE]],
]);

const CANADA_PATCHES = makePatches([
  [300, 40, 650, 150, 26, 20, ['#8bbd9b', '#a2cfae']],
  [1600, 40, 2750, 200, 26, 9, [SEA]],
  [2150, 200, 2800, 420, 16, 8, [SEA]],
  [2270, 40, 2700, 300, 14, 18, ['#b0d3b9']],
]);

const COUNTRY = LAND[0][0];

function OutageMap() {
  return (
    <MapFrame>
      <MapDrawing viewBox="31 32 3074 1500" preserveAspectRatio="none" role="img" aria-label="Outage map">
        <defs>
          <clipPath id="country">
            <polygon points={COUNTRY} />
          </clipPath>
        </defs>
        <rect x="31" y="32" width="3074" height="1500" fill={SEA} />
        {CANADA.map(([points, fill]) => (
          <polygon key={points} points={points} fill={fill} />
        ))}
        {CANADA_PATCHES.map((p) => (
          <polygon key={p.points} points={p.points} fill={p.fill} />
        ))}
        <g clipPath="url(#country)">
          {LAND.map(([points, fill]) => (
            <polygon key={points} points={points} fill={fill} />
          ))}
          {US_PATCHES.map((p) => (
            <polygon key={p.points} points={p.points} fill={p.fill} />
          ))}
          <polygon points="2480,1010 2500,1010 2520,1140 2500,1270 2480,1200" fill={SEA} />
        </g>
        <polygon points="410,950 415,920 450,870 475,858 460,900 425,935" fill="#fff" />
        <polygon points="1218,685 1220,665 1248,648 1240,665" fill="#fff" />
        {LAKES.map(([points, fill]) => (
          <polygon key={points} points={points} fill={fill} />
        ))}
        <path d={BORDERS} fill="none" stroke="#6f7d77" strokeWidth="2" strokeDasharray="5 4" />
        <path
          d={`M172 212 225 237 245 232 255 180 240 162 ${US_NORTH}`}
          fill="none"
          stroke="#7c8a86"
          strokeWidth="2"
        />
        {RED_LINES.map((d) => (
          <path key={d} d={d} fill="none" stroke="#ea4335" strokeWidth="5" strokeDasharray="5 5" />
        ))}
      </MapDrawing>
      {MARKERS.map(([x, y, capital]) => (
        <Marker key={x} $x={x} $y={y} $capital={capital} />
      ))}
      {LABELS.map(([text, x, y, kind]) => (
        <MapLabel key={text} $x={x} $y={y} $kind={kind}>
          {text}
        </MapLabel>
      ))}
    </MapFrame>
  );
}

const STAT_ROWS = [
  { gap: 31, names: ['Cata', 'Major', 'Minor', 'Non Customer Affecting', 'Jeopardy'] },
  { gap: 45, names: ['Special Alert', 'Performance Degraded'] },
];

function OutageSummary() {
  return (
    <Summary>
      <SummaryHead>
        <SummaryLeft>
          <CardTitle>All Verizon Outages</CardTitle>
          <SelectBox label="Outage severity" value="Select Severity" width={251} muted />
        </SummaryLeft>
        <Stats>
          {STAT_ROWS.map((row) => (
            <StatRow key={row.gap} $gap={row.gap}>
              {row.names.map((name) => (
                <Stat key={name}>
                  {name}
                  <StatValue>359</StatValue>
                </Stat>
              ))}
            </StatRow>
          ))}
        </Stats>
      </SummaryHead>
      <OutageMap />
    </Summary>
  );
}

/* ---------- notifications table ---------- */

const Panel = styled.section`
  border-top: 2px solid ${HAIR};
  background: #fff;
`;

const PanelTitle = styled.h2<{ $underline?: boolean }>`
  padding: 4px 0 0 19px;
  border-bottom: 6px solid #000;
  font-size: 33px;
  line-height: 87px;
  text-decoration: ${(p) => (p.$underline ? 'underline' : 'none')};
`;

const Toolbar = styled.div`
  display: flex;
  align-items: center;
  height: 82px;
  padding: 0 38px 0 19px;
  border-bottom: 4px solid #000;
`;

const TextButton = styled.button`
  display: flex;
  align-items: center;
  gap: 12px;
  padding: 0;
  border: 0;
  background: none;
  font-size: 27px;
`;

const ToolGroup = styled.div<{ $gap: number; $end?: boolean }>`
  display: flex;
  align-items: center;
  gap: ${(p) => p.$gap}px;
  margin-left: ${(p) => (p.$end ? 'auto' : '38px')};
`;

const IconPair = styled.div`
  display: flex;
  gap: 38px;
  align-items: center;
`;

const TableArea = styled.div`
  position: relative;
`;

const Table = styled.table`
  width: 100%;
  table-layout: fixed;
  border-spacing: 0;
  white-space: nowrap;
`;

const HeadCell = styled.th`
  height: 73px;
  padding: 0;
  border-bottom: 5px solid #000;
  font-weight: 700;
  text-align: left;
`;

const Cell = styled.td`
  height: 59px;
  padding: 3px 0 0;
  border-bottom: 2px solid ${HAIR};
`;

const ExpandButton = styled(IconButton)`
  margin-left: 29px;
`;

const VerticalTrack = styled.div`
  position: absolute;
  top: 87px;
  right: 0;
  bottom: 19px;
  width: 16px;
  padding: 2px;
  background: #f6f6f6;
`;

const VerticalThumb = styled.div`
  height: 127px;
  border-radius: 6px;
  background: ${HAIR};
`;

const HorizontalTrack = styled.div`
  height: 15px;
  padding: 2px;
  background: #f6f6f6;
`;

const HorizontalThumb = styled.div`
  width: 430px;
  height: 11px;
  border-radius: 6px;
  background: ${HAIR};
`;

const TableFooter = styled.footer`
  display: grid;
  grid-template-columns: 586px auto 1fr;
  align-items: center;
  height: 70px;
  padding: 0 19px;
`;

const FooterGroup = styled.div<{ $gap: number; $end?: boolean }>`
  display: flex;
  align-items: center;
  gap: ${(p) => p.$gap}px;
  justify-content: ${(p) => (p.$end ? 'flex-end' : 'flex-start')};
`;

const Pages = styled.div`
  display: flex;
  margin: 0 30px 0 6px;
`;

const PageButton = styled.button<{ $active?: boolean }>`
  width: 42px;
  height: 42px;
  margin: 0 5px 0 0;
  padding: 0;
  border: 0;
  border-radius: 50%;
  background: ${(p) => (p.$active ? '#000' : 'none')};
  color: ${(p) => (p.$active ? '#fff' : MUTED)};
`;

const Bar = styled.span`
  width: 2px;
  height: 28px;
  background: ${HAIR};
`;

const Total = styled.span`
  display: flex;
  gap: 16px;
  font-size: 27px;
`;

const Export = styled.div`
  display: flex;
  width: 137px;
  height: 37px;
  overflow: hidden;
  border-radius: 19px;
  background: #000;
`;

const ExportButton = styled.button`
  flex: 1;
  padding: 0;
  border: 0;
  background: none;
  color: #fff;
  font-size: 18px;
  font-weight: 700;
`;

const ExportMenu = styled.button`
  display: flex;
  align-items: center;
  width: 34px;
  padding: 0 7px;
  border: 0;
  border-left: 2px solid #fff;
  background: none;
`;

const SaveIcon = () => (
  <svg width="34" height="34" viewBox="0 0 36 36" fill="none" stroke="#000" strokeWidth="2.400">
    <path d="M3.500 1.500H25.500L34.500 11V32.500a2 2 0 0 1-2 2H3.500a2 2 0 0 1-2-2V3.500a2 2 0 0 1 2-2Z" />
    <path d="M7 2V9.500a1.500 1.500 0 0 0 1.500 1.500H20.500a1.500 1.500 0 0 0 1.500-1.500V2M7 34V22.500a1.500 1.500 0 0 1 1.500-1.500H27.500a1.500 1.500 0 0 1 1.500 1.500V34M11 27.500H24.500" />
    <path d="M7 2H14.500V11H7Z" fill="#000" stroke="none" />
  </svg>
);

const FilterIcon = ({ clear }: { clear?: boolean }) => (
  <svg width="34" height="35" viewBox="0 0 36 37" fill="none" stroke="#000" strokeWidth="2.200">
    <path d="M1.500 1.500H34L21.500 22.500V35H14V22.500Z" />
    {clear && (
      <>
        <circle cx="26.500" cy="27.500" r="9.500" fill="#fff" stroke="none" />
        <circle cx="26.500" cy="27.500" r="8.300" fill="#000" stroke="none" />
        <path d="M23 24 30 31M30 24 23 31" stroke="#fff" strokeWidth="1.600" />
      </>
    )}
  </svg>
);

const Arrow = ({ double, left }: { double?: boolean; left?: boolean }) => {
  const width = double ? 22 : 12;
  return (
    <svg width={width} height="22" viewBox={`0 0 ${width} 22`} fill="none" stroke="#000" strokeWidth="2.200">
      {left ? <path d="M11 1 1.500 11 11 21" /> : <path d="M1 1 10.500 11 1 21" />}
      {double && (left ? <path d="M21 1 11.500 11 21 21" /> : <path d="M11 1 20.500 11 11 21" />)}
    </svg>
  );
};

const COLUMNS: [string, number?][] = [
  ['', 83],
  ['Severity', 309],
  ['Notification #', 260],
  ['Relationship', 198],
  ['Ticket #', 249],
  ['Outage Start', 300],
  ['Last Updated', 310],
  ['Status'],
];

const STAMP = '2022-11-30-TO7:26:5...';
const VOC = 'VOC2022133567';
const MAH = 'MAH65432346';
const AUTO = 'AUTO5678';

const ROWS = [
  ['Cata', 'Parent', VOC, 'Initial Verified'],
  ['Major', 'Child', MAH, 'Initial Verified'],
  ['Minor', 'Parent', AUTO, 'Initial Verified'],
  ['Non Customer Affecting', 'Parent', AUTO, 'Update Verified'],
  ['Jeopardy', 'Parent', AUTO, 'Initial Verified'],
  ['Special Alert', 'Parent', VOC, 'Initial Verified'],
  ['Performance Degraded', 'Child', VOC, 'Initial Verified'],
  ['Cata', 'Parent', AUTO, 'Update Verified'],
  ['Major', 'Child', MAH, 'Update Verified'],
  ['Jeopardy', 'Parent', AUTO, 'Update Verified'],
];

function Notifications() {
  return (
    <Panel>
      <PanelTitle>Notifications</PanelTitle>
      <Toolbar>
        <TextButton>
          <svg width="34" height="34" viewBox="0 0 34 34" stroke="#000" strokeWidth="2">
            <path d="M17 0V34M0 17H34" />
          </svg>
          Create
        </TextButton>
        <ToolGroup $gap={19} $end>
          <SelectBox label="Severity filter" value="Select Severity" width={293} muted chevron={18} />
          <IconButton aria-label="Save">
            <SaveIcon />
          </IconButton>
        </ToolGroup>
        <ToolGroup $gap={19}>
          <SearchBox width={293} />
          <IconPair>
            <IconButton aria-label="Filter">
              <FilterIcon />
            </IconButton>
            <IconButton aria-label="Clear filter">
              <FilterIcon clear />
            </IconButton>
          </IconPair>
        </ToolGroup>
      </Toolbar>
      <TableArea>
        <Table>
          <colgroup>
            {COLUMNS.map(([name, width]) => (
              <col key={name} width={width} />
            ))}
          </colgroup>
          <thead>
            <tr>
              {COLUMNS.map(([name]) => (
                <HeadCell key={name} scope="col">
                  {name}
                </HeadCell>
              ))}
            </tr>
          </thead>
          <tbody>
            {ROWS.map(([severity, relation, ticket, status], i) => (
              <tr key={i}>
                <Cell>
                  <ExpandButton aria-label="Expand row">
                    <svg width="25" height="43" viewBox="0 0 25 43" fill="none" stroke="#000" strokeWidth="6.500">
                      <path d="M2 2.500 20.500 21.500 2 40.500" />
                    </svg>
                  </ExpandButton>
                </Cell>
                <Cell>{severity}</Cell>
                <Cell>202211330058761</Cell>
                <Cell>{relation}</Cell>
                <Cell>{ticket}</Cell>
                <Cell>{STAMP}</Cell>
                <Cell>{STAMP}</Cell>
                <Cell>{status}</Cell>
              </tr>
            ))}
          </tbody>
        </Table>
        <VerticalTrack>
          <VerticalThumb />
        </VerticalTrack>
      </TableArea>
      <HorizontalTrack>
        <HorizontalThumb />
      </HorizontalTrack>
      <TableFooter>
        <FooterGroup $gap={19}>
          <SelectBox label="Rows per page" value="10" width={93} chevron={18} />
          <span>Displaying 10 of 100 Rows</span>
        </FooterGroup>
        <FooterGroup $gap={21}>
          <IconButton aria-label="First page">
            <Arrow double left />
          </IconButton>
          <Bar />
          <IconButton aria-label="Previous page">
            <Arrow left />
          </IconButton>
          <Pages>
            {[1, 2, 3, 4, 5, 6, 7, 8, 9, 10].map((n) => (
              <PageButton key={n} $active={n === 1}>
                {n}
              </PageButton>
            ))}
          </Pages>
          <IconButton aria-label="Next page">
            <Arrow />
          </IconButton>
          <Bar />
          <IconButton aria-label="Last page">
            <Arrow double />
          </IconButton>
        </FooterGroup>
        <FooterGroup $gap={19} $end>
          <Field $width={74}>
            <FieldInput aria-label="Page" defaultValue="1" />
          </Field>
          <Total>
            <span>/</span>
            <span>20</span>
          </Total>
          <Export>
            <ExportButton>Export</ExportButton>
            <ExportMenu aria-label="Export options">
              <ChevronDown width={18} color="#fff" />
            </ExportMenu>
          </Export>
        </FooterGroup>
      </TableFooter>
    </Panel>
  );
}

/* ---------- notification detail ---------- */

const DetailToolbar = styled(Toolbar)`
  gap: 58px;
  height: 91px;
  padding-top: 2px;
  border-bottom-width: 3px;
`;

const DetailBody = styled.div`
  position: relative;
  overflow: hidden;
  padding: 74px 0 186px;
`;

const DetailGrid = styled.div`
  display: grid;
  grid-template-columns: 1fr 1fr;
  grid-template-rows: 162px 155px;
  padding: 0 32px;
`;

const DetailHeading = styled.h2`
  font-size: 25px;
  line-height: 30px;
`;

const Equipment = styled.div`
  padding: 0 0 38px 28px;
`;

const EquipmentList = styled.div`
  padding-top: 14px;
  font-size: 27px;
  line-height: 60px;
`;

const Reports = styled.div`
  display: flex;
  flex-direction: column;
  gap: 134px;
  padding-left: 19px;
`;

const Watermark = styled.div`
  position: absolute;
  inset: 36px 30px 0 0;
  display: flex;
  align-items: center;
  justify-content: center;
  color: #f0f0f0;
  font-size: 174px;
  font-weight: 700;
  white-space: nowrap;
  transform: rotate(-31deg);
`;

const Front = styled.div`
  position: relative;
`;

function Detail() {
  return (
    <Panel>
      <PanelTitle $underline>Notifications - 202211330058761</PanelTitle>
      <DetailToolbar>
        <TextButton>
          <svg width="33" height="34" viewBox="0 0 33 34" fill="none" stroke="#000" strokeWidth="2.200">
            <circle cx="6.500" cy="17" r="5.300" />
            <circle cx="26" cy="6.500" r="5.300" />
            <circle cx="26" cy="27.500" r="5.300" />
            <path d="M11 14.500 21.500 9M11 19.500 21.500 25" />
          </svg>
          Share
        </TextButton>
        <Legend $drop={0}>
          <Dot $color="#d52b1e" />
          Cata
        </Legend>
      </DetailToolbar>
      <DetailBody>
        <Watermark>Work in Progress</Watermark>
        <Front>
          <DetailGrid>
            <DetailHeading>Contact</DetailHeading>
            <DetailHeading>Email</DetailHeading>
            <DetailHeading>Location</DetailHeading>
            <DetailHeading>Affected Sites</DetailHeading>
          </DetailGrid>
          <Equipment>
            <DetailHeading>Equipment</DetailHeading>
            <EquipmentList>
              <p>Item Type :</p>
              <p>Item Name :</p>
              <p>Network :</p>
            </EquipmentList>
          </Equipment>
          <Reports>
            <DetailHeading>Situation report</DetailHeading>
            <DetailHeading>Impacted Customers</DetailHeading>
          </Reports>
        </Front>
      </DetailBody>
    </Panel>
  );
}

export default function App() {
  return (
    <>
      <GlobalStyle />
      <PageHeader />
      <Main>
        <TitleRow>
          <PageTitle>Dashboard</PageTitle>
          <Segments>
            <Segment $active>Till Date</Segment>
            <Segment>This Month</Segment>
            <Segment>This Quarter</Segment>
            <Segment>This Year</Segment>
          </Segments>
        </TitleRow>
        <CardGrid>
          <ChartCard title="Total Customers Affected at Time">
            <AffectedAtTime />
          </ChartCard>
          <ChartCard title="Type of Customers Impacted">
            <CustomerTypes />
          </ChartCard>
          <ChartCard title="Services Affected">
            <Services />
          </ChartCard>
          <ChartCard title="Outage Locations">
            <OutageLocations />
          </ChartCard>
          <ChartCard title="Outage Trends" legend={{ name: 'Consumer', color: '#ffbc3d', drop: 10 }}>
            <Trend label="Outage trends" color="#ffbc3d" shift={0} />
          </ChartCard>
          <ChartCard title="Severity Trends" legend={{ name: 'Cata', color: '#d52b1e', drop: 2 }}>
            <Trend label="Severity trends" color="#ed1c24" shift={2} />
          </ChartCard>
        </CardGrid>
        <OutageSummary />
        <Notifications />
        <Detail />
      </Main>
    </>
  );
}
